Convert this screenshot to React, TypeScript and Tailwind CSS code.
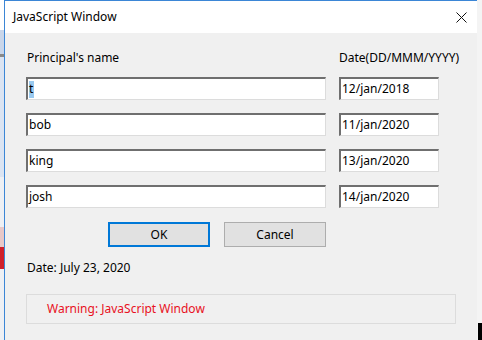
const rows = [
    { name: "t", date: "12/jan/2018", selected: true },
    { name: "bob", date: "11/jan/2020" },
    { name: "king", date: "13/jan/2020" },
    { name: "josh", date: "14/jan/2020" },
];

const Field = ({ value, width, selected }: { value: string; width: string; selected?: boolean }) => (
    <div
        className={`${width} h-[23px] bg-white border-t-2 border-l-2 border-b border-r border-t-[#6f6f6f] border-l-[#6f6f6f] border-b-[#dcdcdc] border-r-[#dcdcdc] flex items-center pl-[1px] text-[12px] text-black leading-none`}
    >
        {selected ? <span className="bg-[#99c9ef] h-[17px] flex items-center pr-[1px]">{value}</span> : <span>{value}</span>}
    </div>
);

const App = () => {
    return (
        <div
            className="w-[482px] h-[340px] flex overflow-hidden bg-white"
            style={{ fontFamily: '"Noto Sans", "Open Sans", sans-serif' }}
        >
            {/* background window peeking out on the left */}
            <div className="w-[4px] h-full flex flex-col bg-[#f3f5f9]">
                <div className="h-[30px] bg-white" />
                <div className="h-[24px] bg-[#c9d6ea]" />
                <div className="h-[3px] bg-[#8a8a8a]" />
                <div className="h-[120px] bg-[#dbe4f2]" />
                <div className="h-[50px] bg-[#eef0f4]" />
                <div className="h-[20px] bg-[#e8c8c8]" />
                <div className="h-[22px] bg-[#d0202a]" />
                <div className="flex-1 bg-[#eef0f4]" />
            </div>

            {/* dialog */}
            <div className="w-[473px] h-full flex flex-col border-l border-t border-[#3b86d6] bg-[#f0f0f0]">
                <div className="h-[32px] bg-white flex items-center justify-between pl-[8px] pr-[10px]">
                    <span className="text-[12px] text-black">JavaScript Window</span>
                    <svg width="11" height="11" viewBox="0 0 11 11" className="mt-[1px]">
                        <path d="M0.5 0.5 L10.5 10.5 M10.5 0.5 L0.5 10.5" stroke="#111" strokeWidth="1" fill="none" />
                    </svg>
                </div>

                <div className="flex-1 flex flex-col pl-[21px] pt-[17px]">
                    <div className="flex gap-[13px] text-[12px] text-black leading-[16px]">
                        <span className="w-[300px] pl-[1px]">Principal's name</span>
                        <span>Date(DD/MMM/YYYY)</span>
                    </div>

                    <div className="flex flex-col gap-[13px] mt-[11px]">
                        {rows.map((r) => (
                            <div key={r.name} className="flex gap-[13px]">
                                <Field value={r.name} width="w-[300px]" selected={r.selected} />
                                <Field value={r.date} width="w-[100px]" />
                            </div>
                        ))}
                    </div>

                    <div className="w-[300px] flex justify-end gap-[14px] mt-[14px]">
                        <button className="w-[102px] h-[25px] bg-[#e1e1e1] border-2 border-[#0078d7] text-[12px] text-black">
                            OK
                        </button>
                        <button className="w-[102px] h-[25px] bg-[#e1e1e1] border border-[#adadad] text-[12px] text-black">
                            Cancel
                        </button>
                    </div>

                    <div className="mt-[13px] text-[12px] leading-[16px] text-black pl-[1px]">Date: July 23, 2020</div>

                    <div className="mt-[18px] w-[430px] h-[30px] border border-[#dcdcdc] flex items-center pl-[20px] text-[12px] text-[#e81123]">
                        Warning: JavaScript Window
                    </div>
                </div>
            </div>

            {/* right edge */}
            <div className="w-[5px] h-full flex flex-col bg-[#f4f4f4]">
                <div className="flex-1" />
                <div className="h-[17px] bg-black ml-[1px]" />
            </div>
        </div>
    );
};

export default App;
